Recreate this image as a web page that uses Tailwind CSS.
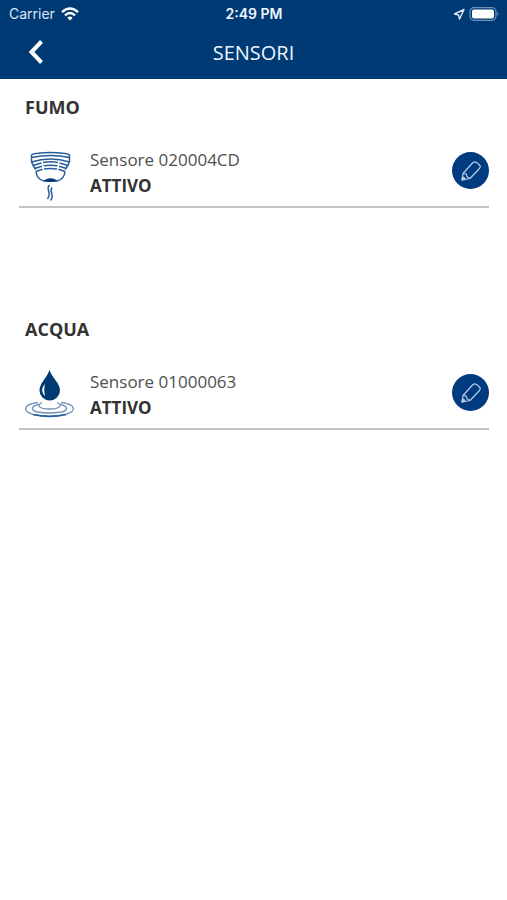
<!DOCTYPE html>
<html lang="it">
<head>
<meta charset="utf-8">
<meta name="viewport" content="width=device-width, initial-scale=1">
<title>Sensori</title>
<script src="https://cdn.jsdelivr.net/npm/@tailwindcss/browser@4"></script>
</head>
<body class="min-h-screen bg-white font-['Open_Sans','Noto_Sans',sans-serif] text-[#333333]">
<header class="bg-[#003a74] text-white">
  <div class="grid h-7 grid-cols-3 items-center pr-2 pl-[9px] font-[Inter,Roboto,sans-serif] text-sm">
    <div class="flex items-center gap-[6px] text-[#dce8f5]">
      <span>Carrier</span>
      <svg class="h-[14px] w-[18px]" viewBox="0 0 18 14" fill="none" stroke="#fff" stroke-width="2.4" aria-hidden="true">
        <path d="M1 5.2Q9-2.2 17 5.2M4 8.4Q9 3.8 14 8.4"/><path d="M6.3 10.8Q9 8.3 11.7 10.8L9 13.5Z" fill="#fff" stroke="none"/>
      </svg>
    </div>
    <span class="text-center font-semibold text-[#eef5fc]">2:49 PM</span>
    <div class="flex items-center justify-end gap-1">
      <svg class="h-3 w-3" viewBox="0 0 12 12" fill="none" stroke="#dce8f5" stroke-width="1.4" stroke-linejoin="round" aria-hidden="true"><path d="M11 1.500L1.500 6L5.500 7L6.500 11Z"/></svg>
      <svg class="h-[14px] w-[30px]" viewBox="0 0 30 14" aria-hidden="true"><rect x="1" y=".7" width="26" height="12.6" rx="4" fill="none" stroke="#6f92b8" stroke-width="1.2"/><rect x="3" y="2.5" width="22" height="9" rx="2" fill="#fff"/><path d="M28.2 5Q30.5 7 28.2 9Z" fill="#6f92b8"/></svg>
    </div>
  </div>
  <div class="grid h-[51px] grid-cols-[72px_1fr_72px] items-start">
    <button type="button" aria-label="Indietro" class="flex h-12 items-center justify-center">
      <svg class="h-6 w-4" viewBox="0 0 16 24" fill="none" stroke="#fff" stroke-width="4" aria-hidden="true"><path d="M13.5 1.5L3.500 12L13.5 22.5"/></svg>
    </button>
    <h1 class="text-center text-xl leading-[50px] text-[#eef5fc]">SENSORI</h1>
  </div>
</header>
<main class="flex flex-col gap-[107px] pt-[14px] pr-[18px] pl-[19px]">
  <section>
    <h2 class="pl-[6px] text-lg leading-7 font-bold">FUMO</h2>
    <div class="mt-[14px] flex h-[73px] items-center border-b-2 border-[#c4c4c4] pl-[6px]">
      <svg class="mb-1 h-[52px] w-[50px] shrink-0 self-end" viewBox="25 149 50 52" fill="none" stroke="#285d9b" stroke-width="1.5" aria-hidden="true">
        <path d="M31.500 154Q33 152.500 38 152.200Q50.500 150.800 63 152.200Q68 152.500 69.500 154V160.500Q68.500 164.500 65 168.500M31.500 154V160.500Q32.500 164.500 36 168.500"/>
        <path d="M31.500 156.500Q50.500 152.500 69.500 156.500M31.500 161Q50.500 155 69.500 161"/>
        <path d="M43 161.500Q50.500 160 58 161.500M43.500 164.800Q50.500 163.500 57.500 164.800M44 168Q50.500 166.800 57 168M33 164.500L41.500 162M34.500 167.500L42 165.200M36 170.500L42.500 168.300M68 164.500L59.500 162M66.500 167.500L59 165.200M65 170.500L58.500 168.300"/>
        <path d="M36 170.500C36.500 176 39.500 179 44 180H57C61.500 179 64.500 176 65 170.500"/>
        <path d="M44 180Q46 177.200 50.500 177.200T57 180Q50.500 182 44 180Z" fill="#003a74" stroke="none"/>
        <path d="M49.500 184C45 188.500 52.500 191 47.500 198M52 186.500C48.500 191 55.500 194 50.500 199.500" stroke-width="1.500"/>
      </svg>
      <div class="flex-1 pt-1 pl-[15px]">
        <p class="text-[17px] leading-[26px] text-[#505050]">Sensore 020004CD</p>
        <p class="text-[17px] leading-[26px] font-bold">ATTIVO</p>
      </div>
      <button type="button" aria-label="Modifica sensore 020004CD" class="flex size-[37px] items-center justify-center rounded-full bg-[#003b80]">
        <svg class="size-6" viewBox="0 0 24 24" fill="none" stroke="#b5cee9" stroke-width="1.2" stroke-linejoin="round" aria-hidden="true"><path d="M3 21L4 14.500L13.500 4Q15.500 2 17.500 3.500L20.500 6Q22 7.500 20.500 9.500L11 19.500ZM4 14.500L7 14.800L8 17.800L11 19.500"/><path d="M3 21L3.500 18Q5.500 18 6 20.400Z" fill="#b5cee9"/></svg>
      </button>
    </div>
  </section>
  <section>
    <h2 class="pl-[6px] text-lg leading-7 font-bold">ACQUA</h2>
    <div class="mt-[14px] flex h-[73px] items-center border-b-2 border-[#c4c4c4] pl-[6px]">
      <svg class="mb-2 h-[52px] w-[50px] shrink-0 self-end" viewBox="25 367 50 52" fill="none" aria-hidden="true">
        <g stroke="#6f91ba" stroke-width="1.300"><path d="M38 401.500C22 403.500 23 410.500 33 413.300Q49.500 417.500 66 413.300C76 410.500 77 403.500 61 401.500"/><path d="M39 403.500C30 405 31 409.500 37.500 411Q49.500 413 61.500 411C68 409.500 69 405 60 403.500"/><path d="M42 401.500C36 404.500 39 408 49.500 408S63 404.500 57 401.500"/></g>
        <path d="M33 413.500Q49.500 417.200 66 413.500" stroke="#285d9b" stroke-width="1.600"/>
        <path d="M49.500 369C47 377 39.500 382 39.500 389.500A10.200 10 0 0 0 60 389.500C60 382 52 377 49.500 369Z" fill="#003a74"/>
        <path d="M45 383C40.500 388 42 392 45 395C44 390 44 387 45 383Z" fill="#fff"/>
      </svg>
      <div class="flex-1 pt-1 pl-[15px]">
        <p class="text-[17px] leading-[26px] text-[#505050]">Sensore 01000063</p>
        <p class="text-[17px] leading-[26px] font-bold">ATTIVO</p>
      </div>
      <button type="button" aria-label="Modifica sensore 01000063" class="flex size-[37px] items-center justify-center rounded-full bg-[#003b80]">
        <svg class="size-6" viewBox="0 0 24 24" fill="none" stroke="#b5cee9" stroke-width="1.2" stroke-linejoin="round" aria-hidden="true"><path d="M3 21L4 14.500L13.500 4Q15.500 2 17.500 3.500L20.500 6Q22 7.500 20.500 9.500L11 19.500ZM4 14.500L7 14.800L8 17.800L11 19.500"/><path d="M3 21L3.500 18Q5.500 18 6 20.400Z" fill="#b5cee9"/></svg>
      </button>
    </div>
  </section>
</main>
</body>
</html>
